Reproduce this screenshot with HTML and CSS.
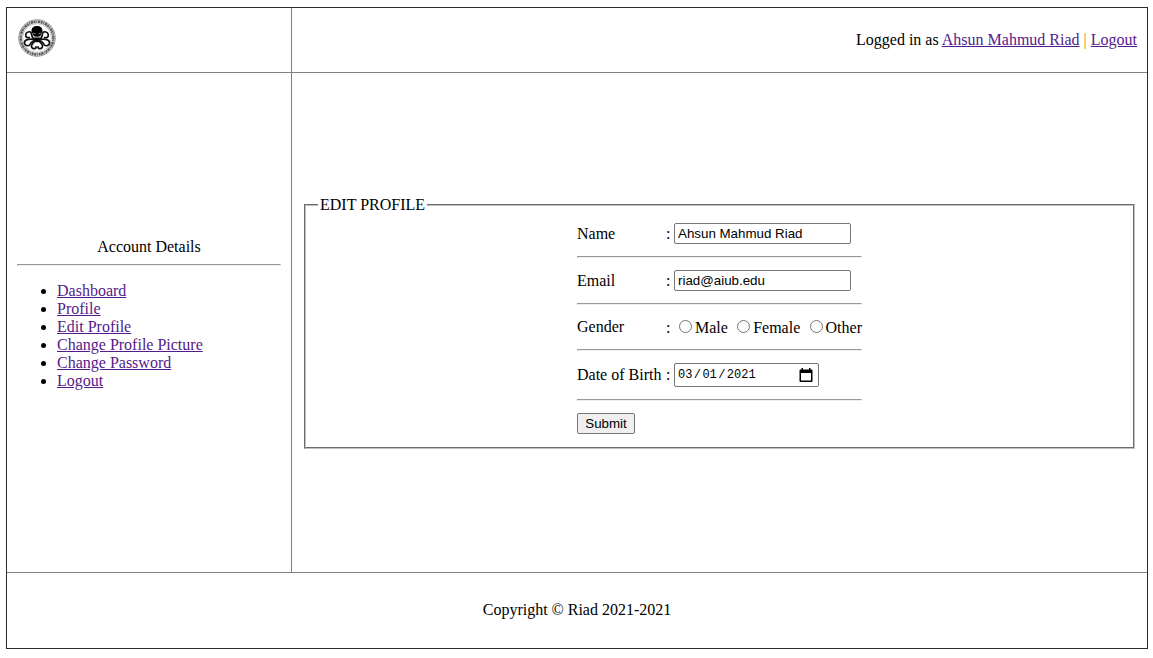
FILE: index.html
```html
<!DOCTYPE html>
<html lang="en">
<head>
<meta charset="utf-8">
<title>Edit Profile</title>
<link rel="stylesheet" href="styles.css">
</head>
<body>
<div class="page">
  <header class="brand">
    <svg class="logo" viewBox="0 0 38 38" fill="none" stroke="#111">
      <circle cx="19" cy="19" r="18.2" stroke="#888" stroke-width="1"/>
      <circle cx="19" cy="19" r="16.3" stroke="#bbb" stroke-width="3"/>
      <circle cx="19" cy="19" r="16.3" stroke="#555" stroke-width="2.3" stroke-dasharray="1.5 1 .7 1.2 2 .9"/>
      <circle cx="19" cy="19" r="14.3" stroke="#999" stroke-width=".5"/>
      <path fill="#000" stroke="none" d="M19 7c-3.300 0-5.500 2-5.500 4.700 0 1.500.9 2.100 1.200 3l.8 2.100c1 .4 1.300 1 3.500 1s2.500-.6 3.500-1l.8-2.100c.3-.9 1.200-1.500 1.200-3C24.500 9 22.300 7 19 7z"/>
      <path fill="#000" stroke="none" d="M15.500 18.500h7l1 2.500-4.500 2.500-4.500-2.500z"/>
      <g stroke-width="1.700" stroke-linecap="round">
        <path d="M16.500 20.500c-3-1-2.500-5.500-3.500-7s-5-.5-5.300 2.300 2.300 3.200 3.500 2.700"/>
        <path d="M21.500 20.500c3-1 2.500-5.500 3.500-7s5-.5 5.300 2.300-2.300 3.200-3.500 2.700"/>
        <path d="M17 21c-4-1.500-10-1-10.500 2.300s4.500 4.500 5.500 2.200 2.500-3.500 5-3.500"/>
        <path d="M21 21c4-1.500 10-1 10.500 2.300s-4.500 4.500-5.500 2.200-2.500-3.500-5-3.500"/>
        <path d="M17.500 22c-2.500 1.500-5 4.500-3.700 6.500s4.500 1.300 4.200-.7"/>
        <path d="M20.500 22c2.500 1.500 5 4.500 3.700 6.500s-4.500 1.300-4.200-.7"/>
      </g>
      <path stroke="#999" stroke-width="1" d="M15.500 14.200l2 .8m5-.8l-2 .8"/>
    </svg>
  </header>
  <div class="session">
    <span>Logged in as <a href="#">Ahsun Mahmud Riad</a> <span class="bar">|</span> <a href="#">Logout</a></span>
  </div>
  <nav class="account">
    <div class="account-title">Account Details</div>
    <hr class="rule">
    <ul class="menu">
      <li><a href="#">Dashboard</a></li>
      <li><a href="#">Profile</a></li>
      <li><a href="#">Edit Profile</a></li>
      <li><a href="#">Change Profile Picture</a></li>
      <li><a href="#">Change Password</a></li>
      <li><a href="#">Logout</a></li>
    </ul>
  </nav>
  <main class="content">
    <fieldset class="panel">
      <legend class="legend">EDIT PROFILE</legend>
      <form class="form">
        <div class="row"><label>Name</label><span>:</span><input class="text" type="text" value="Ahsun Mahmud Riad"></div>
        <hr class="rule">
        <div class="row"><label>Email</label><span>:</span><input class="text" type="text" value="riad@aiub.edu"></div>
        <hr class="rule">
        <div class="row gender"><label>Gender</label><span class="low">:</span>
          <div class="options low"><label class="option"><input type="radio" name="g">Male</label><label class="option"><input type="radio" name="g">Female</label><label class="option"><input type="radio" name="g">Other</label></div>
        </div>
        <hr class="rule">
        <div class="row dob"><label>Date of Birth</label><span>:</span>
          <div class="date"><span>03</span><span class="slash">/</span><span>01</span><span class="slash">/</span><span>2021</span>
            <svg class="calendar" viewBox="0 0 14 15"><path fill="#000" fill-rule="evenodd" d="M2.500 0h1.500v1.500h6V0h1.500v1.500h1q1 0 1 1V13q0 1-1 1h-11q-1 0-1-1V2.500q0-1 1-1h1zM2 5v7.500h10V5z"/></svg>
          </div>
        </div>
        <hr class="rule">
        <button class="submit" type="button">Submit</button>
      </form>
    </fieldset>
  </main>
  <footer class="footer">Copyright © Riad 2021-2021</footer>
</div>
</body>
</html>
```

FILE: styles.css
```css
* { box-sizing: border-box; }
body {
  margin: 7px 5px 9px 6px;
  background: #fff;
  color: #000;
  font: 16px/18px "Liberation Serif", "Times New Roman", serif;
}
a { color: #551a8b; text-decoration: underline; }
.page {
  display: grid;
  grid-template-columns: 285px 1fr;
  grid-template-rows: 65px 500px 75px;
  width: 1142px;
  height: 642px;
  border: 1px solid #2b2b2b;
}
.brand { border-right: 1px solid #808080; border-bottom: 1px solid #808080; padding: 11px; }
.logo { display: block; width: 38px; height: 38px; }
.session {
  display: flex;
  align-items: center;
  justify-content: flex-end;
  border-bottom: 1px solid #808080;
  padding-right: 10px;
}
.bar { color: #e08a20; }
.account { border-right: 1px solid #808080; border-bottom: 1px solid #808080; padding: 165px 10px 0; }
.account-title { text-align: center; }
.rule { margin: 0; border: 1px inset #eee; height: 2px; }
.account .rule { margin-top: 8px; }
.menu { margin: 16px 0 0; padding-left: 40px; }
.content { border-bottom: 1px solid #808080; padding: 123px 12px 0; }
.panel {
  margin: 0;
  border: 2px groove #c0c0c0;
  padding: 9px 0 13px 12px;
  width: 831px;
  height: 253px;
}
.legend { padding: 0 2px; }
.form { width: 285px; margin-left: 259px; }
.row { display: grid; grid-template-columns: 89px 8px 1fr; align-items: center; height: 21px; margin-bottom: 12px; }
.form .rule { margin-bottom: 12px; }
.text {
  width: 177px;
  height: 21px;
  border: 1px solid #767676;
  border-radius: 2px;
  padding: 1px 3px;
  background: #fff;
  font: 13.333px "Liberation Sans", Arial, sans-serif;
}
.gender { height: 20px; }
.low { padding-top: 2px; }
.options { display: flex; justify-content: space-between; padding-left: 5px; }
.option { display: flex; white-space: nowrap; }
.option input { width: 13px; height: 13px; margin: 1px 3px 0 0; }
.dob { height: 24px; }
.date {
  display: flex;
  align-items: center;
  width: 145px;
  height: 24px;
  border: 1px solid #767676;
  border-radius: 2px;
  padding: 0 5px 0 3px;
  font: 12px "Liberation Mono", monospace;
}
.slash { width: 10px; text-align: center; }
.calendar { width: 14px; height: 15px; margin-left: auto; }
.submit {
  display: block;
  width: 58px;
  height: 21px;
  border: 1px solid #767676;
  border-radius: 2px;
  padding: 0;
  background: #efefef;
  color: #000;
  font: 13.333px "Liberation Sans", Arial, sans-serif;
}
.footer { grid-column: 1 / -1; text-align: center; padding-top: 28px; }
```
